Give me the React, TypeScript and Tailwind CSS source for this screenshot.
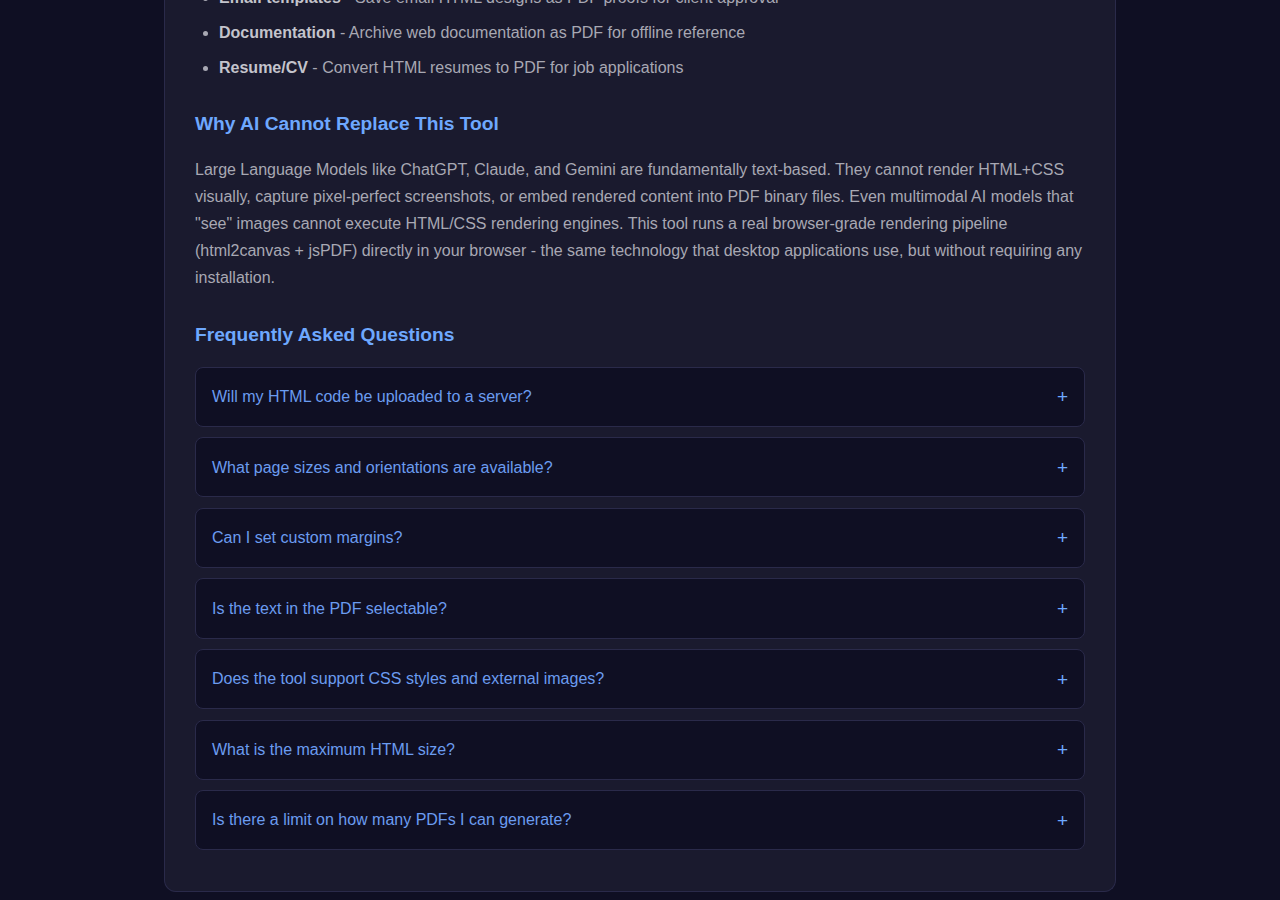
const useCases = [
  { title: "Email templates", text: "Save email HTML designs as PDF proofs for client approval" },
  { title: "Documentation", text: "Archive web documentation as PDF for offline reference" },
  { title: "Resume/CV", text: "Convert HTML resumes to PDF for job applications" },
];

const faqs = [
  "Will my HTML code be uploaded to a server?",
  "What page sizes and orientations are available?",
  "Can I set custom margins?",
  "Is the text in the PDF selectable?",
  "Does the tool support CSS styles and external images?",
  "What is the maximum HTML size?",
  "Is there a limit on how many PDFs I can generate?",
];

export default function App() {
  return (
    <div
      className="min-h-[900px] bg-[#0f0f23] overflow-hidden"
      style={{ fontFamily: '"Liberation Sans", Arial, sans-serif' }}
    >
      <div className="mx-auto w-[952px] -mt-[15px] mb-[8px] rounded-b-[12px] border border-t-0 border-[#2a2a4a] bg-[#1a1a2e] px-[30px] pb-[30px]">
        <ul className="list-disc pl-[24px] text-[16px] leading-[1.6] text-[#a8a8b3] marker:text-[#a8a8b3]">
          {useCases.map((u) => (
            <li key={u.title} className="mb-[9.5px]">
              <strong className="font-bold text-[#c4c4cc]">{u.title}</strong> - {u.text}
            </li>
          ))}
        </ul>

        <h3 className="mt-[31px] mb-[19px] text-[19.2px] font-bold leading-[1.3] text-[#6ea8fe]">
          Why AI Cannot Replace This Tool
        </h3>
        <p className="text-[16px] leading-[1.7] text-[#a8a8b3]">
          Large Language Models like ChatGPT, Claude, and Gemini are fundamentally text-based. They cannot render
          HTML+CSS visually, capture pixel-perfect screenshots, or embed rendered content into PDF binary files. Even
          multimodal AI models that "see" images cannot execute HTML/CSS rendering engines. This tool runs a real
          browser-grade rendering pipeline (html2canvas + jsPDF) directly in your browser - the same technology that
          desktop applications use, but without requiring any installation.
        </p>

        <h3 className="mt-[31px] mb-[19px] text-[19.2px] font-bold leading-[1.3] text-[#6ea8fe]">
          Frequently Asked Questions
        </h3>
        <div>
          {faqs.map((q) => (
            <div
              key={q}
              className="mb-[10.4px] flex items-center justify-between rounded-[8px] border border-[#2a2a4a] bg-[#0f0f23] px-[16px] py-[16.3px] text-[16px] leading-[1.6] text-[#6b9cf0]"
            >
              <span>{q}</span>
              <span className="text-[19px] leading-none text-[#6ea8fe]">+</span>
            </div>
          ))}
        </div>
      </div>
    </div>
  );
}
